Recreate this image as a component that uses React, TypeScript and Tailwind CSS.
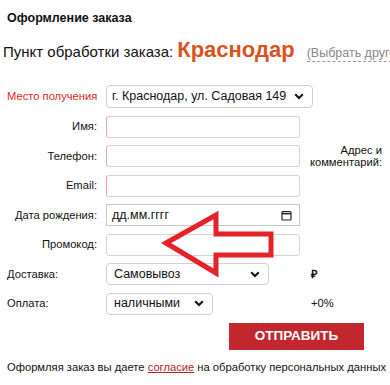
import React from 'react';

const ChevronDown = () => (
  <svg width="10" height="7" viewBox="0 0 10 7" className="shrink-0">
    <path d="M1.2 1.2 L5 5 L8.8 1.2" fill="none" stroke="#111" strokeWidth="2" />
  </svg>
);

const CalendarIcon = () => (
  <svg width="11" height="11" viewBox="0 0 11 11">
    <rect x="1" y="1.5" width="9" height="8.5" rx="1" fill="none" stroke="#222" strokeWidth="1.2" />
    <line x1="1" y1="3.6" x2="10" y2="3.6" stroke="#222" strokeWidth="1.6" />
  </svg>
);

const Field = ({ width = 'w-[194px]' }: { width?: string }) => (
  <div className={`${width} h-[22px] rounded-[3px] border border-[#d4d4d4] border-l-[#e8a0a8] bg-white`} />
);

const FakeSelect = ({ label, width, pl = 'pl-[6px]' }: { label: string; width: string; pl?: string }) => (
  <div
    className={`${width} ${pl} flex items-center justify-between whitespace-nowrap rounded-[4px] border border-[#cfcfcf] bg-white pr-[8px] text-[12.5px] text-[#111]`}
  >
    <span>{label}</span>
    <ChevronDown />
  </div>
);

const Label = ({ children }: { children: React.ReactNode }) => (
  <div className="w-[90px] shrink-0 whitespace-nowrap text-right text-[11.2px] text-[#111]">{children}</div>
);

export default function App() {
  return (
    <div className="relative h-[385px] w-[390px] overflow-hidden bg-white font-['Liberation_Sans',Arial,sans-serif] text-[#111]">
      <div className="px-[7px] pt-[10px]">
        <h1 className="text-[12.5px] font-bold leading-[16px]">Оформление заказа</h1>

        <div className="-ml-[4px] mt-[7px] flex items-baseline whitespace-nowrap">
          <span className="text-[15px]">Пункт обработки заказа:</span>
          <span className="ml-[4px] text-[22px] font-bold text-[#d9531e]">Краснодар</span>
          <span className="ml-[12px] border-b border-dashed border-[#999] text-[12.5px] leading-[15px] text-[#888]">
            (Выбрать другой)
          </span>
        </div>

        {/* form */}
        <div className="mt-[19px] flex flex-col gap-[7.5px]">
          <div className="flex h-[23px] items-center">
            <div className="w-[90px] shrink-0 whitespace-nowrap text-[11.2px] text-[#e31e24]">Место получения</div>
            <div className="ml-[9px] flex h-[23px]">
              <FakeSelect label="г. Краснодар, ул. Садовая 149" width="w-[207px]" pl="pl-[5px]" />
            </div>
          </div>

          <div className="flex h-[22px] items-center">
            <Label>Имя:</Label>
            <div className="ml-[9px]">
              <Field />
            </div>
          </div>

          <div className="flex h-[22px] items-center">
            <Label>Телефон:</Label>
            <div className="ml-[9px]">
              <Field />
            </div>
            <div className="ml-auto pr-[1px] text-right text-[11.2px] leading-[12px]">
              Адрес и
              <br />
              комментарий:
            </div>
          </div>

          <div className="flex h-[22px] items-center">
            <Label>Email:</Label>
            <div className="ml-[9px]">
              <Field />
            </div>
          </div>

          <div className="flex h-[22px] items-center">
            <Label>Дата рождения:</Label>
            <div className="ml-[9px] flex h-[22px] w-[194px] items-center justify-between border border-[#c8c8c8] bg-white pl-[5px] pr-[7px] text-[12.5px]">
              <span>дд.мм.гггг</span>
              <CalendarIcon />
            </div>
          </div>

          <div className="flex h-[22px] items-center">
            <Label>Промокод:</Label>
            <div className="ml-[9px] h-[22px] w-[194px] rounded-[3px] border border-[#d4d4d4] bg-white" />
          </div>

          <div className="flex h-[22px] items-center">
            <div className="w-[90px] shrink-0 text-[11.2px]">Доставка:</div>
            <div className="ml-[9px] flex h-[22px]">
              <FakeSelect label="Самовывоз" width="w-[163px]" pl="pl-[7px]" />
            </div>
            <div className="ml-[42px] text-[11.2px] font-bold">₽</div>
          </div>

          <div className="flex h-[22px] items-center">
            <div className="w-[90px] shrink-0 text-[11.2px]">Оплата:</div>
            <div className="ml-[9px] flex h-[22px]">
              <FakeSelect label="наличными" width="w-[107px]" pl="pl-[7px]" />
            </div>
            <div className="ml-[98px] text-[11.2px]">+0%</div>
          </div>
        </div>

        <div className="mt-[8px] flex justify-end pr-[19px]">
          <button className="h-[27px] w-[135px] bg-[#c1272d] text-[13.5px] font-bold text-white">ОТПРАВИТЬ</button>
        </div>

        <p className="mt-[9px] whitespace-nowrap text-[11.2px]">
          Оформляя заказ вы даете{' '}
          <span className="text-[#b0242a] underline">согласие</span> на обработку персональных данных
        </p>
      </div>

      {/* red annotation arrow */}
      <svg className="pointer-events-none absolute left-0 top-0" width="390" height="385">
        <polygon
          points="166,243 216,215 216,234 271,234 271,255 216,255 216,273"
          fill="none"
          stroke="#e5222a"
          strokeWidth="5"
          strokeLinejoin="miter"
        />
      </svg>
    </div>
  );
}
